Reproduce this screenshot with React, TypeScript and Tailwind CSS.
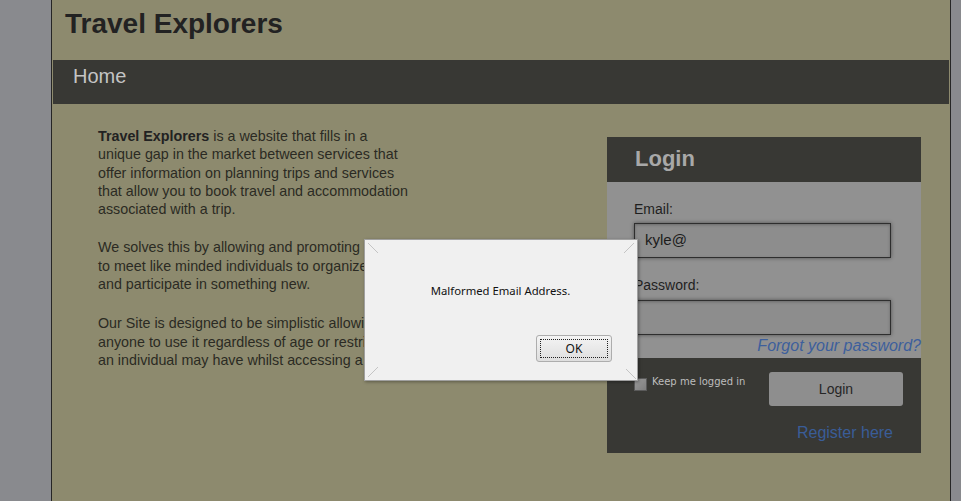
import React from "react";

const sans = { fontFamily: '"Liberation Sans", Arial, sans-serif' };

function Corner({ className }: { className: string }) {
  return (
    <svg className={`absolute ${className}`} width="10" height="10" viewBox="0 0 10 10">
      <line x1="0" y1="0" x2="10" y2="10" stroke="#c4c4c4" strokeWidth="1" />
    </svg>
  );
}

function AlertBox() {
  return (
    <div className="absolute left-[364px] top-[239px] h-[142px] w-[274px] border border-[#a0a0a0] bg-[#f0f0f0] shadow-[1px_1px_3px_rgba(0,0,0,0.35)]">
      <Corner className="left-[3px] top-[3px]" />
      <Corner className="right-[3px] top-[3px] -scale-x-100" />
      <Corner className="left-[3px] bottom-[3px] -scale-y-100" />
      <Corner className="right-[1px] bottom-[1px]" />
      <p
        className="pr-px pt-[43px] text-center text-[11.3px] leading-[16px] text-[#111]"
        style={{ fontFamily: '"Noto Sans", "Open Sans", sans-serif' }}
      >
        Malformed Email Address.
      </p>
      <div className="mt-[36px] flex justify-end pr-[25px]">
        <button
          className="flex h-[27px] w-[76px] items-center justify-center rounded-[3px] border border-[#adadad] bg-gradient-to-b from-[#f4f4f4] to-[#dedede] p-[3px]"
          style={{ fontFamily: '"Noto Sans", "Open Sans", sans-serif' }}
        >
          <span className="flex h-full w-full items-center justify-center border border-dotted border-[#222] text-[12px] text-[#111]">
            OK
          </span>
        </button>
      </div>
    </div>
  );
}

function LoginPanel() {
  return (
    <div className="mt-[33px] w-[314px]" style={sans}>
      <div className="h-[45px] bg-[#383834] pl-[28px] pt-[9px]">
        <h2 className="text-[22px] font-bold leading-[26px] text-[#a8a8a8]">Login</h2>
      </div>
      <div className="h-[176px] bg-[#919191] pl-[27px] pt-[19px]">
        <label className="block text-[14px] leading-[16px] text-[#1f1f1f]">Email:</label>
        <div className="mt-[6px] flex h-[35px] w-[257px] items-center border border-[#2e2e2e] bg-[#8d8d8d] pl-[10px] text-[15px] text-[#1c1c1c] shadow-[0_0_4px_rgba(0,0,0,0.45),inset_0_1px_3px_rgba(0,0,0,0.25)]">
          kyle@
        </div>
        <label className="mt-[19px] block text-[14px] leading-[16px] text-[#1f1f1f]">Password:</label>
        <div className="mt-[7px] h-[35px] w-[257px] border border-[#2e2e2e] bg-[#8d8d8d] shadow-[0_0_4px_rgba(0,0,0,0.45),inset_0_1px_3px_rgba(0,0,0,0.25)]" />
        <p className="mt-[2px] text-right text-[16px] italic leading-[18px] text-[#3d5f9c]">
          Forgot your password?
        </p>
      </div>
      <div className="h-[95px] bg-[#383834]">
        <div className="flex items-start pl-[27px] pr-[18px] pt-[14px]">
          <span className="mt-[6px] h-[13px] w-[13px] border border-[#5a5a5a] bg-gradient-to-br from-[#9a9a9a] to-[#7e7e7e]" />
          <span
            className="ml-[5px] mt-[4px] text-[10px] leading-[12px] text-[#bdbdbd]"
            style={{ fontFamily: '"DejaVu Sans", Verdana, sans-serif' }}
          >
            Keep me logged in
          </span>
          <button className="ml-auto h-[34px] w-[134px] rounded-[3px] bg-[#8e8e8e] text-[14px] text-[#262626]">
            Login
          </button>
        </div>
        <p className="mt-[17px] pr-[28px] text-right text-[16px] leading-[20px] text-[#3a5d98]">
          Register here
        </p>
      </div>
    </div>
  );
}

export default function App() {
  return (
    <div className="relative flex h-[501px] w-[961px] overflow-hidden bg-[#898a8e]" style={sans}>
      <div className="w-[51px] shrink-0" />
      <div className="h-[501px] w-[900px] shrink-0 border-x border-[#262626] bg-[#8d8a6e]">
        <header className="h-[60px] pl-[13px] pt-[8px]">
          <h1 className="text-[28px] font-bold leading-[32px] text-[#222]">Travel Explorers</h1>
        </header>
        <nav className="mx-px h-[44px] bg-[#383834] pl-[20px] pt-[5px]">
          <span className="text-[20px] leading-[23px] text-[#c4c4c4]">Home</span>
        </nav>
        <div className="flex">
          <div className="w-[555px] shrink-0 pl-[46px] pt-[23px]">
            <div className="w-[310px] text-[14.3px] leading-[18.3px] text-[#2b2a23]">
              <p className="mb-[20px]">
                <b className="text-[#222]">Travel Explorers</b> is a website that fills in a unique gap in the
                market between services that offer information on planning trips and services that allow you
                to book travel and accommodation associated with a trip.
              </p>
              <p className="mb-[21px]">
                We solves this by allowing and promoting users to meet like minded individuals to organize trips
                and participate in something new.
              </p>
              <p>
                Our Site is designed to be simplistic allowing anyone to use it regardless of age or restrictions
                an individual may have whilst accessing a site.
              </p>
            </div>
          </div>
          <LoginPanel />
        </div>
      </div>
      <AlertBox />
    </div>
  );
}
